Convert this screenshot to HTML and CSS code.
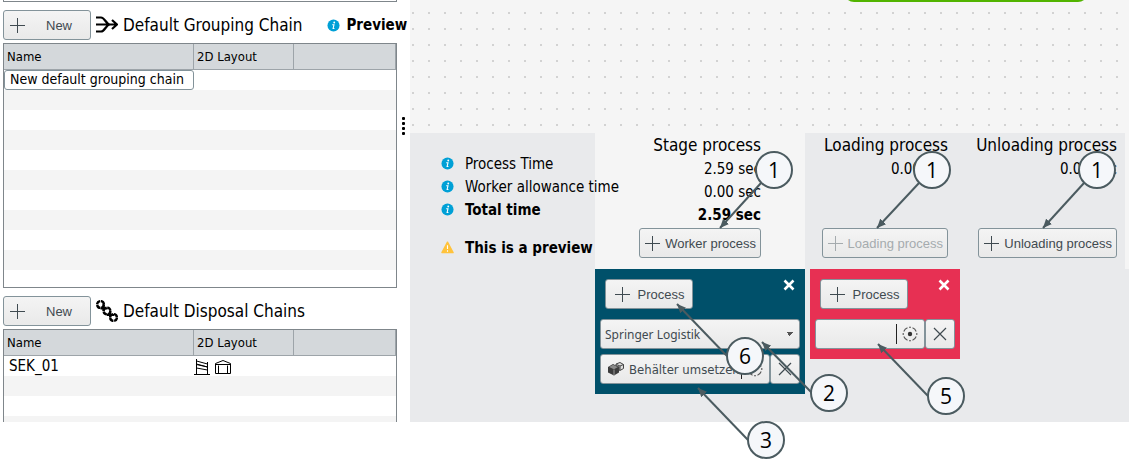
FILE: index.html
```
<!DOCTYPE html>
<html lang="en">
<head>
    <meta charset="UTF-8" />
    <meta name="viewport" content="width=device-width, initial-scale=1" />
    <title>Default Chains</title>
    <link rel="stylesheet" href="styles.css">
</head>
<body>
    <svg class="defs" width="0" height="0" aria-hidden="true">
        <symbol id="plus" viewBox="0 0 16 16">
            <path d="M8.500 1v15M1 8.500h15" fill="none" stroke="currentColor" />
        </symbol>
        <symbol id="info" viewBox="0 0 14 14">
            <circle cx="7" cy="7" r="6.5" fill="#00a0d6" />
            <circle cx="7.8" cy="3.8" r="1" fill="#fff" />
            <path d="M5.6 6.2h1.9L6.6 10.2h1.4" fill="none" stroke="#fff" stroke-width="1.2" />
        </symbol>
        <symbol id="cross" viewBox="0 0 16 16">
            <path d="M2 2l12 12M14 2L2 14" fill="none" stroke="currentColor" stroke-width="1.2" />
        </symbol>
        <symbol id="close" viewBox="0 0 12 12">
            <path d="M1.5 1.5l9 9M10.5 1.5l-9 9" fill="none" stroke="#fff" stroke-width="2.6" />
        </symbol>
        <symbol id="target" viewBox="0 0 16 16">
            <circle cx="8" cy="8" r="2.2" fill="#333" />
            <path d="M5.5 1.8A6.6 6.6 0 0 0 1.8 5.5M1.2 7v2M1.8 10.5a6.6 6.6 0 0 0 3.7 3.7M10.5 1.8a6.6 6.6 0 0 1 3.7 3.7M14.8 7v2M14.2 10.5a6.6 6.6 0 0 1-3.7 3.7M7 1.2h2M7 14.8h2" fill="none" stroke="#555" stroke-width="1.1" />
        </symbol>
    </svg>

    <div class="app">
        <aside class="sidebar">
            <div class="cut-table"></div>

            <div class="toolbar">
                <button class="btn btn-new"><svg class="icon"><use href="#plus" /></svg><span>New</span></button>
                <svg class="chain-icon" viewBox="0 0 22 22">
                    <path d="M0 3.500h5c4 0 5 7 9 7h7M0 10.500h14M0 17.500h5c4 0 5-7 9-7M16 6l5 4.500-5 4.500" fill="none" stroke="#000" stroke-width="2.2" />
                </svg>
                <h2>Default Grouping Chain</h2>
                <div class="preview"><svg class="info"><use href="#info" /></svg>Preview</div>
            </div>
            <div class="table-box grouping">
                <table>
                    <thead>
                        <tr><th class="col-name">Name</th><th class="col-layout">2D Layout</th><th></th></tr>
                    </thead>
                    <tbody>
                        <tr><td><input class="cell-edit" type="text" aria-label="Name" value="New default grouping chain"></td><td></td><td></td></tr>
                        <tr><td></td><td></td><td></td></tr>
                        <tr><td></td><td></td><td></td></tr>
                        <tr><td></td><td></td><td></td></tr>
                        <tr><td></td><td></td><td></td></tr>
                        <tr><td></td><td></td><td></td></tr>
                        <tr><td></td><td></td><td></td></tr>
                        <tr><td></td><td></td><td></td></tr>
                        <tr><td></td><td></td><td></td></tr>
                        <tr><td></td><td></td><td></td></tr>
                        <tr><td></td><td></td><td></td></tr>
                    </tbody>
                </table>
            </div>

            <div class="toolbar">
                <button class="btn btn-new"><svg class="icon"><use href="#plus" /></svg><span>New</span></button>
                <svg class="chain-icon" viewBox="0 0 22 22">
                    <g fill="none" stroke="#000" stroke-width="2.4">
                        <circle cx="4.500" cy="4.500" r="3.400" stroke-dasharray="4.500 0.800" />
                        <circle cx="11" cy="11" r="3.400" stroke-dasharray="4.500 0.800" />
                        <circle cx="17.500" cy="17.500" r="3.400" stroke-dasharray="4.500 0.800" />
                        <path d="M7.500 4v7M4.500 8.500h7M14 10.500v7M11 15h7" stroke-width="2" />
                    </g>
                </svg>
                <h2>Default Disposal Chains</h2>
            </div>
            <div class="table-box disposal">
                <table>
                    <thead>
                        <tr><th class="col-name">Name</th><th class="col-layout">2D Layout</th><th></th></tr>
                    </thead>
                    <tbody>
                        <tr>
                            <td class="name">SEK_01</td>
                            <td>
                                <svg class="layout-icon" viewBox="0 0 16 16">
                                    <path d="M2.500 0v15M13.500 3v12M0 15.500h16M2.500 2l11 3M2.500 5l11 3M2.500 5.500l11 2.500M2.500 9l11 2" fill="none" stroke="#000" />
                                </svg>
                                <svg class="layout-icon" viewBox="0 0 16 16">
                                    <path d="M.5 14.500v-10L8 1.500l7.500 3v10zM.5 5.500h15M3.500 14.500v-8M12.500 14.500v-8" fill="none" stroke="#000" />
                                </svg>
                            </td>
                            <td></td>
                        </tr>
                        <tr><td></td><td></td><td></td></tr>
                        <tr><td></td><td></td><td></td></tr>
                        <tr><td></td><td></td><td></td></tr>
                    </tbody>
                </table>
            </div>
        </aside>

        <div class="splitter"><i></i><i></i><i></i><i></i></div>

        <main class="workspace">
            <div class="canvas"><div class="node"></div></div>

            <div class="summary">
                <div class="labels">
                    <div class="label"><svg class="info"><use href="#info" /></svg>Process Time</div>
                    <div class="label"><svg class="info"><use href="#info" /></svg>Worker allowance time</div>
                    <div class="label bold"><svg class="info"><use href="#info" /></svg>Total time</div>
                    <div class="label bold warning">
                        <svg class="info" viewBox="0 0 14 14">
                            <path d="M7 1.200L13 12.500H1z" fill="#ffc33c" stroke="#ffc33c" stroke-width="1.500" stroke-linejoin="round" />
                            <path d="M7 4.500v4M7 10v1.500" stroke="#fff" stroke-width="1.200" />
                        </svg>
                        This is a preview
                    </div>
                </div>
                <section class="stage">
                    <h2>Stage process</h2>
                    <div class="time">2.59 sec</div>
                    <div class="time">0.00 sec</div>
                    <div class="time bold">2.59 sec</div>
                    <button class="btn"><svg class="icon"><use href="#plus" /></svg>Worker process</button>
                </section>
                <section class="loading">
                    <h2>Loading process</h2>
                    <div class="time">0.00 sec</div>
                    <button class="btn" disabled><svg class="icon"><use href="#plus" /></svg>Loading process</button>
                </section>
                <section class="unloading">
                    <h2>Unloading process</h2>
                    <div class="time">0.00 sec</div>
                    <button class="btn"><svg class="icon"><use href="#plus" /></svg>Unloading process</button>
                </section>
                <div class="edge"></div>
            </div>

            <div class="cards">
                <div class="card card-stage">
                    <div class="card-head">
                        <button class="btn btn-process"><svg class="icon"><use href="#plus" /></svg>Process</button>
                        <button class="close" aria-label="Close"><svg><use href="#close" /></svg></button>
                    </div>
                    <select class="picker" aria-label="Worker">
                        <option>Springer Logistik</option>
                    </select>
                    <div class="field-row">
                        <div class="field">
                            <svg class="box-icon" viewBox="0 0 18 16">
                                <path d="M1 6l5-3 6 3v5.500L7 14.500l-6-3z" fill="#3c3c3c" />
                                <path d="M2 6l4-2.300L11 6 7 8.300z" fill="#8a8a8a" />
                                <path d="M7 8.500v6" stroke="#999" />
                                <path d="M9 3l4-1.500 3.500 2v4L13 9.500 12 9V6L9 4.500z" fill="#ddd" stroke="#444" />
                                <path d="M9.500 3.500l3.500 1.500 3.500-1.500M13 5v4" fill="none" stroke="#444" />
                            </svg>
                            <input type="text" aria-label="Stage process step" value="Behälter umsetzen">
                            <svg class="icon target"><use href="#target" /></svg>
                        </div>
                        <button class="btn btn-clear" aria-label="Clear"><svg class="icon"><use href="#cross" /></svg></button>
                    </div>
                </div>
                <div class="card card-loading">
                    <div class="card-head">
                        <button class="btn btn-process"><svg class="icon"><use href="#plus" /></svg>Process</button>
                        <button class="close" aria-label="Close"><svg><use href="#close" /></svg></button>
                    </div>
                    <div class="field-row">
                        <div class="field">
                            <input type="text" aria-label="Loading process step">
                            <svg class="icon target"><use href="#target" /></svg>
                        </div>
                        <button class="btn btn-clear" aria-label="Clear"><svg class="icon"><use href="#cross" /></svg></button>
                    </div>
                </div>
            </div>
        </main>

        <!-- numbered callouts -->
        <svg class="callouts" width="1129" height="469">
            <defs>
                <marker id="arrow" viewBox="0 0 9 8" refX="9" refY="4" markerWidth="9" markerHeight="8" markerUnits="userSpaceOnUse" orient="auto">
                    <path d="M0 0l9 4-9 4z" fill="#4b5b60" />
                </marker>
            </defs>
            <g class="lines">
                <path d="M761 183L720 228" />
                <path d="M919 183L877 228" />
                <path d="M1084 183L1043 228" />
                <path d="M727 356L677 304" />
                <path d="M812 393L762 342" />
                <path d="M748 440L698 388" />
                <path d="M928 396L878 344" />
            </g>
            <g class="dots">
                <circle cx="774" cy="170" r="18" />
                <circle cx="932" cy="170" r="18" />
                <circle cx="1097" cy="170" r="18" />
                <circle cx="745" cy="356" r="18" />
                <circle cx="829" cy="393" r="18" />
                <circle cx="766" cy="440" r="18" />
                <circle cx="946" cy="396" r="18" />
            </g>
            <g class="numbers">
                <text x="774" y="178">1</text>
                <text x="932" y="178">1</text>
                <text x="1097" y="178">1</text>
                <text x="745" y="364">6</text>
                <text x="829" y="401">2</text>
                <text x="766" y="448">3</text>
                <text x="946" y="404">5</text>
            </g>
        </svg>
    </div>
</body>
</html>
```
FILE: styles.css
```
* {
    box-sizing: border-box;
}
body {
    margin: 0;
    background: #fff;
    color: #000;
    font-family: Tahoma, "DejaVu Sans Condensed", "Noto Sans", sans-serif;
    font-size: 15px;
}
svg {
    display: block;
    flex: none;
}
.defs {
    position: absolute;
}
.app {
    position: relative;
    display: flex;
    min-height: 469px;
    align-items: flex-start;
}
h2 {
    margin: 0;
    font-size: 17px;
    font-weight: normal;
    line-height: 24px;
    white-space: nowrap;
}
.bold {
    font-weight: bold;
}

/* buttons */
.btn {
    display: flex;
    flex: none;
    align-items: center;
    justify-content: center;
    gap: 5px;
    height: 30px;
    padding: 0 4px;
    border: 1px solid #83939a;
    border-radius: 3px;
    background: linear-gradient(#f4f4f4, #e9e9e9);
    color: #3f4a50;
    font-family: "Liberation Sans", sans-serif;
    font-size: 13px;
    white-space: nowrap;
}
.btn:disabled {
    color: #a5abae;
}
.icon {
    width: 16px;
    height: 16px;
}
.btn-new {
    width: 88px;
    justify-content: flex-start;
    padding: 0 5px;
    gap: 21px;
}

/* left side */
.sidebar {
    width: 394px;
    margin-left: 3px;
    flex: none;
}
.cut-table {
    height: 2px;
    border: 1px solid #7f868b;
    border-top: 0;
}
.toolbar {
    display: flex;
    align-items: center;
    height: 30px;
    margin: 8px 0 3px;
}
.chain-icon {
    width: 22px;
    height: 22px;
    margin: 0 5px;
}
.preview {
    display: flex;
    align-items: center;
    gap: 6px;
    margin-left: 25px;
    font-weight: bold;
}
.info {
    width: 13px;
    height: 13px;
}
.table-box {
    border: 1px solid #7f868b;
    overflow: hidden;
}
.grouping {
    height: 245px;
}
.disposal {
    height: 93px;
    border-bottom: 0;
}
table {
    width: 100%;
    table-layout: fixed;
    border-collapse: separate;
    border-spacing: 0;
}
th {
    height: 26px;
    padding: 0 3px;
    background: #d4d8db;
    border-right: 1px solid #9da4a9;
    border-bottom: 1px solid #9da4a9;
    font-size: 13px;
    font-weight: normal;
    line-height: 20px;
    text-align: left;
}
.col-name {
    width: 190px;
}
.col-layout {
    width: 100px;
}
td {
    height: 20px;
    padding: 0;
    font-size: 14px;
    line-height: 20px;
}
tbody tr:nth-child(even) {
    background: #f4f4f4;
}
.name {
    padding-left: 5px;
    font-size: 15px;
}
.cell-edit {
    display: block;
    width: 190px;
    height: 20px;
    padding: 0 5px 3px;
    border: 1px solid #83939a;
    border-radius: 3px;
    font: inherit;
}
.layout-icon {
    display: inline-block;
    width: 16px;
    height: 16px;
    margin-right: 1px;
    vertical-align: middle;
}
.splitter {
    display: flex;
    flex-direction: column;
    align-items: center;
    gap: 2px;
    width: 13px;
    padding-top: 117px;
    flex: none;
}
.splitter i {
    width: 3px;
    height: 3px;
    border-radius: 1px;
    background: #000;
}

/* right side */
.workspace {
    flex: 1;
    min-width: 0;
    min-height: 422px;
    background: #e9eaec;
}
.canvas {
    position: relative;
    height: 133px;
    overflow: hidden;
    background: #f5f5f5 conic-gradient(from 270deg at 2px 2px, #d2d2d2 90deg, transparent 0) 2px 12px / 16px 16px;
}
.node {
    position: absolute;
    left: 434px;
    top: -18px;
    width: 244px;
    height: 20px;
    border-radius: 10px;
    background: #52b400;
}
.summary {
    display: grid;
    grid-template-columns: 185px 210px 155px 165px 1fr;
    height: 136px;
}
.labels {
    z-index: 1;
    padding: 19px 0 0 31px;
}
.label {
    display: flex;
    align-items: center;
    gap: 11px;
    height: 23px;
    white-space: nowrap;
}
.warning {
    margin-top: 15px;
}
.summary section {
    display: flex;
    flex-direction: column;
    align-items: flex-end;
}
.stage {
    padding-right: 44px;
}
.loading {
    padding-right: 12px;
}
.unloading {
    padding-right: 8px;
}
.stage, .edge {
    background: #f5f5f5;
}
.time {
    height: 23px;
    line-height: 25px;
}
.summary .btn {
    margin: auto 0 11px;
}

.cards {
    display: flex;
    align-items: flex-start;
    gap: 5px;
    padding-left: 185px;
}
.card {
    display: flex;
    flex-direction: column;
    gap: 5px;
    padding: 10px 5px;
}
.card-stage {
    width: 210px;
    background: #00506a;
}
.card-loading {
    width: 150px;
    background: #e73053;
}
.card-head {
    display: flex;
    align-items: flex-start;
    justify-content: space-between;
    padding: 0 5px;
    margin-bottom: 5px;
}
.btn-process {
    width: 88px;
    gap: 8px;
}
.close {
    padding: 0;
    border: 0;
    background: none;
}
.close svg {
    width: 12px;
    height: 12px;
}
.picker {
    width: 100%;
    height: 30px;
    padding: 0 4px;
    border: 1px solid #83939a;
    border-radius: 3px;
    appearance: none;
    background: conic-gradient(from 315deg at 50% 100%, #555 90deg, transparent 0) right 5px center / 8px 4px no-repeat, linear-gradient(#f4f4f4, #e9e9e9);
    background: linear-gradient(to bottom left, #555 50%, transparent 50%) right 9px center / 4px 4px no-repeat, linear-gradient(to bottom right, #555 50%, transparent 50%) right 5px center / 4px 4px no-repeat, linear-gradient(#f4f4f4, #e9e9e9);
    color: #3f4a50;
    font-family: "Noto Sans", sans-serif;
    font-size: 12px;
}
.field-row {
    display: flex;
}
.field {
    display: flex;
    flex: 1;
    align-items: center;
    min-width: 0;
    height: 30px;
    padding: 0 6px;
    border: 1px solid #83939a;
    border-radius: 3px;
    background: linear-gradient(#f4f4f4, #e9e9e9);
}
.field input {
    flex: 1;
    min-width: 0;
    height: 20px;
    padding: 0;
    border: 0;
    border-right: 1px solid #222;
    background: none;
    color: #3f4a50;
    font-family: inherit;
    font-size: 13px;
}
.box-icon {
    width: 18px;
    height: 16px;
    margin-right: 4px;
}
.target {
    margin-left: 5px;
}
.btn-clear {
    width: 30px;
    padding: 0;
}

.callouts {
    position: absolute;
    left: 0;
    top: 0;
    z-index: 2;
    pointer-events: none;
}
.lines path {
    stroke: #4b5b60;
    stroke-width: 2;
    marker-end: url(#arrow);
}
.dots circle {
    fill: #f5f7fa;
    stroke: #4b5b60;
    stroke-width: 2;
}
.numbers text {
    font-family: "Open Sans", sans-serif;
    font-size: 21px;
    text-anchor: middle;
}
```
